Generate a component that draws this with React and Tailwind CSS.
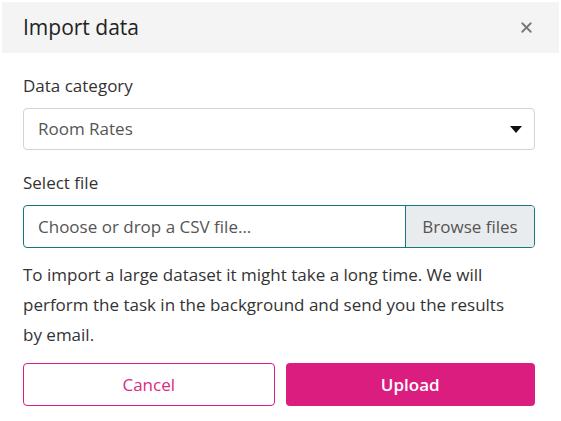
import React from "react";
import { X } from "lucide-react";

const font = { fontFamily: "'Open Sans', Lato, sans-serif" };

export default function App() {
  return (
    <div className="w-[561px] h-[421px] bg-white p-[2px] text-[#333333]" style={font}>
      {/* Header */}
      <div className="h-[51px] bg-[#f4f4f4] flex items-center justify-between pl-[21px] pr-[24px]">
        <h1 className="text-[21px] text-[#222222]">Import data</h1>
        <X size={17} strokeWidth={2.5} className="text-[#777777]" />
      </div>

      {/* Body */}
      <div className="pl-[21px] pr-[24px] pt-[21px]">
        <label className="block text-[17px] leading-[24px] mb-[10px]">Data category</label>
        <div className="h-[42px] border border-[#cfd4da] rounded-[4px] flex items-center justify-between pl-[14px] pr-[12px]">
          <span className="text-[17px] text-[#555555]">Room Rates</span>
          <svg width="12" height="7" viewBox="0 0 12 7">
            <path d="M0 0h12L6 7z" fill="#111111" />
          </svg>
        </div>

        <label className="block text-[17px] leading-[24px] mt-[21px] mb-[10px]">Select file</label>
        <div className="h-[43px] border border-[#17777a] rounded-[4px] flex overflow-hidden">
          <div className="flex-1 flex items-center pl-[14px] text-[17px] text-[#555555]">
            Choose or drop a CSV file...
          </div>
          <div className="w-[129px] bg-[#e9ecef] border-l border-[#17777a] flex items-center justify-center text-[17px] text-[#555555]">
            Browse files
          </div>
        </div>

        <p className="text-[17px] leading-[30px] mt-[12px] pr-[20px]">
          To import a large dataset it might take a long time. We will perform the task in the background and send you the results by email.
        </p>

        <div className="flex gap-[11px] mt-[13px]">
          <button className="flex-1 h-[43px] border border-[#db1d80] rounded-[4px] text-[#db2a85] text-[17px] bg-white">
            Cancel
          </button>
          <button className="flex-1 h-[43px] rounded-[4px] bg-[#db1d80] text-white text-[17px] font-semibold">
            Upload
          </button>
        </div>
      </div>
    </div>
  );
}
